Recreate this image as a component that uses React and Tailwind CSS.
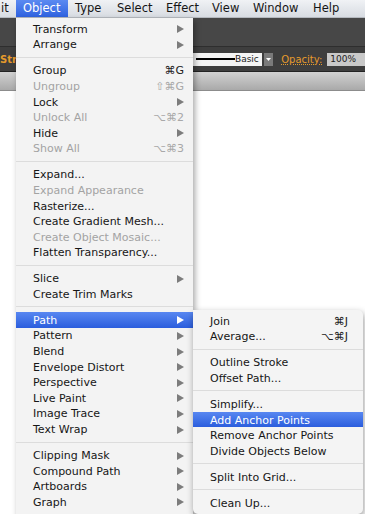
import React from 'react'

const MAIN = [
  { label: 'Transform', arrow: true },
  { label: 'Arrange', arrow: true },
  { sep: true },
  { label: 'Group', shortcut: '⌘G' },
  { label: 'Ungroup', shortcut: '⇧⌘G', disabled: true },
  { label: 'Lock', arrow: true },
  { label: 'Unlock All', shortcut: '⌥⌘2', disabled: true },
  { label: 'Hide', arrow: true },
  { label: 'Show All', shortcut: '⌥⌘3', disabled: true },
  { sep: true },
  { label: 'Expand...' },
  { label: 'Expand Appearance', disabled: true },
  { label: 'Rasterize...' },
  { label: 'Create Gradient Mesh...' },
  { label: 'Create Object Mosaic...', disabled: true },
  { label: 'Flatten Transparency...' },
  { sep: true },
  { label: 'Slice', arrow: true },
  { label: 'Create Trim Marks' },
  { sep: true },
  { label: 'Path', arrow: true, active: true },
  { label: 'Pattern', arrow: true },
  { label: 'Blend', arrow: true },
  { label: 'Envelope Distort', arrow: true },
  { label: 'Perspective', arrow: true },
  { label: 'Live Paint', arrow: true },
  { label: 'Image Trace', arrow: true },
  { label: 'Text Wrap', arrow: true },
  { sep: true },
  { label: 'Clipping Mask', arrow: true },
  { label: 'Compound Path', arrow: true },
  { label: 'Artboards', arrow: true },
  { label: 'Graph', arrow: true },
]

const PATH_SUB = [
  { label: 'Join', shortcut: '⌘J' },
  { label: 'Average...', shortcut: '⌥⌘J' },
  { sep: true },
  { label: 'Outline Stroke' },
  { label: 'Offset Path...' },
  { sep: true },
  { label: 'Simplify...' },
  { label: 'Add Anchor Points', active: true },
  { label: 'Remove Anchor Points' },
  { label: 'Divide Objects Below' },
  { sep: true },
  { label: 'Split Into Grid...' },
  { sep: true },
  { label: 'Clean Up...' },
]

function Arrow({ white }) {
  return (
    <svg width="7" height="8" viewBox="0 0 7 8" className="shrink-0">
      <polygon points="0,0 7,4 0,8" fill={white ? '#ffffff' : '#7c7c7c'} />
    </svg>
  )
}

function MenuRows({ items, padLeft, padRight }) {
  return items.map((it, i) => {
    if (it.sep) {
      return (
        <div key={i} className="h-[10.4px] flex items-center">
          <div className="h-px w-full bg-[#dcdcdc]" />
        </div>
      )
    }
    const text = it.active ? 'text-white' : it.disabled ? 'text-[#a3a3a3]' : 'text-[#161616]'
    return (
      <div
        key={i}
        className={`h-[15.6px] flex items-center justify-between pt-[1px] ${padLeft} ${padRight} ${text}
          ${it.active ? 'bg-gradient-to-b from-[#5887f1] to-[#2b5ddd]' : ''}`}
      >
        <span className="whitespace-nowrap leading-none">{it.label}</span>
        {it.arrow && <Arrow white={it.active} />}
        {it.shortcut && (
          <span className={`leading-none whitespace-nowrap ${it.disabled ? 'text-[#a8a8a8]' : 'text-[#222]'}`}>
            {it.shortcut}
          </span>
        )}
      </div>
    )
  })
}

export default function App() {
  return (
    <div className="relative w-[365px] h-[514px] overflow-hidden bg-white font-['DejaVu_Sans',sans-serif] text-[11px]">
      {/* Menu bar */}
      <div className="h-[18px] flex items-stretch bg-gradient-to-b from-[#f0f2f5] to-[#d8dce2] border-b border-[#b5b9bf] text-[#151515] text-[11.5px]">
        <div className="w-[16px] flex items-center pl-[1px] pt-[1px]">it</div>
        <div className="w-[52px] flex items-center pl-[7px] pt-[1px] text-white bg-gradient-to-b from-[#5b8af1] to-[#2f62e0]">Object</div>
        <div className="w-[42px] flex items-center pl-[7px] pt-[1px]">Type</div>
        <div className="w-[49px] flex items-center pl-[7px] pt-[1px]">Select</div>
        <div className="w-[46px] flex items-center pl-[7px] pt-[1px]">Effect</div>
        <div className="w-[41px] flex items-center pl-[7px] pt-[1px]">View</div>
        <div className="w-[60px] flex items-center pl-[7px] pt-[1px]">Window</div>
        <div className="flex items-center pl-[7px] pt-[1px]">Help</div>
      </div>

      {/* Control panel */}
      <div className="h-[29px] bg-[#474747] border-b border-[#2e2e2e]" />
      <div className="h-[25px] bg-[#3e3e3e] border-b border-[#232323] flex items-center">
        <span className="w-[186px] text-[10px] font-bold text-[#e59a2c]">Stroke:</span>
        <div className="w-[11px] h-[13px] bg-[#5a5a5a] border border-[#6a6a6a]" />
        <div className="ml-[6px] w-[72px] h-[13px] bg-[#f4f4f4] flex items-center pl-[5px] pr-[3px] justify-between">
          <div className="w-[39px] h-[2px] bg-black" />
          <span className="text-[9px] text-[#222] leading-none">Basic</span>
        </div>
        <div className="ml-[2px] w-[10px] h-[13px] bg-[#7a7a7a] flex items-center justify-center">
          <svg width="5" height="3" viewBox="0 0 5 3"><polygon points="0,0 5,0 2.5,3" fill="#fff" /></svg>
        </div>
        <span className="ml-[8px] text-[10px] text-[#e59a2c] underline decoration-dotted">Opacity:</span>
        <div className="ml-[5px] w-[40px] h-[13px] bg-[#c9c9c9] flex items-center pl-[3px] text-[9px] text-[#222] leading-none">100%</div>
      </div>
      <div className="h-[19px] bg-gradient-to-b from-[#d2d2d2] to-[#a9a9a9] border-b border-[#8c8c8c]" />

      {/* Object menu */}
      <div className="absolute left-[16px] top-[18px] w-[177px] pt-[3px] pb-[12px] bg-[#f3f3f3] shadow-[2px_3px_6px_rgba(0,0,0,0.35)]">
        <MenuRows items={MAIN} padLeft="pl-[17px]" padRight="pr-[9px]" />
      </div>

      {/* Path submenu */}
      <div className="absolute left-[193px] top-[310px] w-[170px] py-[3px] bg-[#f4f4f4] rounded-[5px] rounded-tl-none shadow-[1px_3px_7px_rgba(0,0,0,0.4)] overflow-hidden">
        <MenuRows items={PATH_SUB} padLeft="pl-[17px]" padRight="pr-[15px]" />
      </div>
    </div>
  )
}
